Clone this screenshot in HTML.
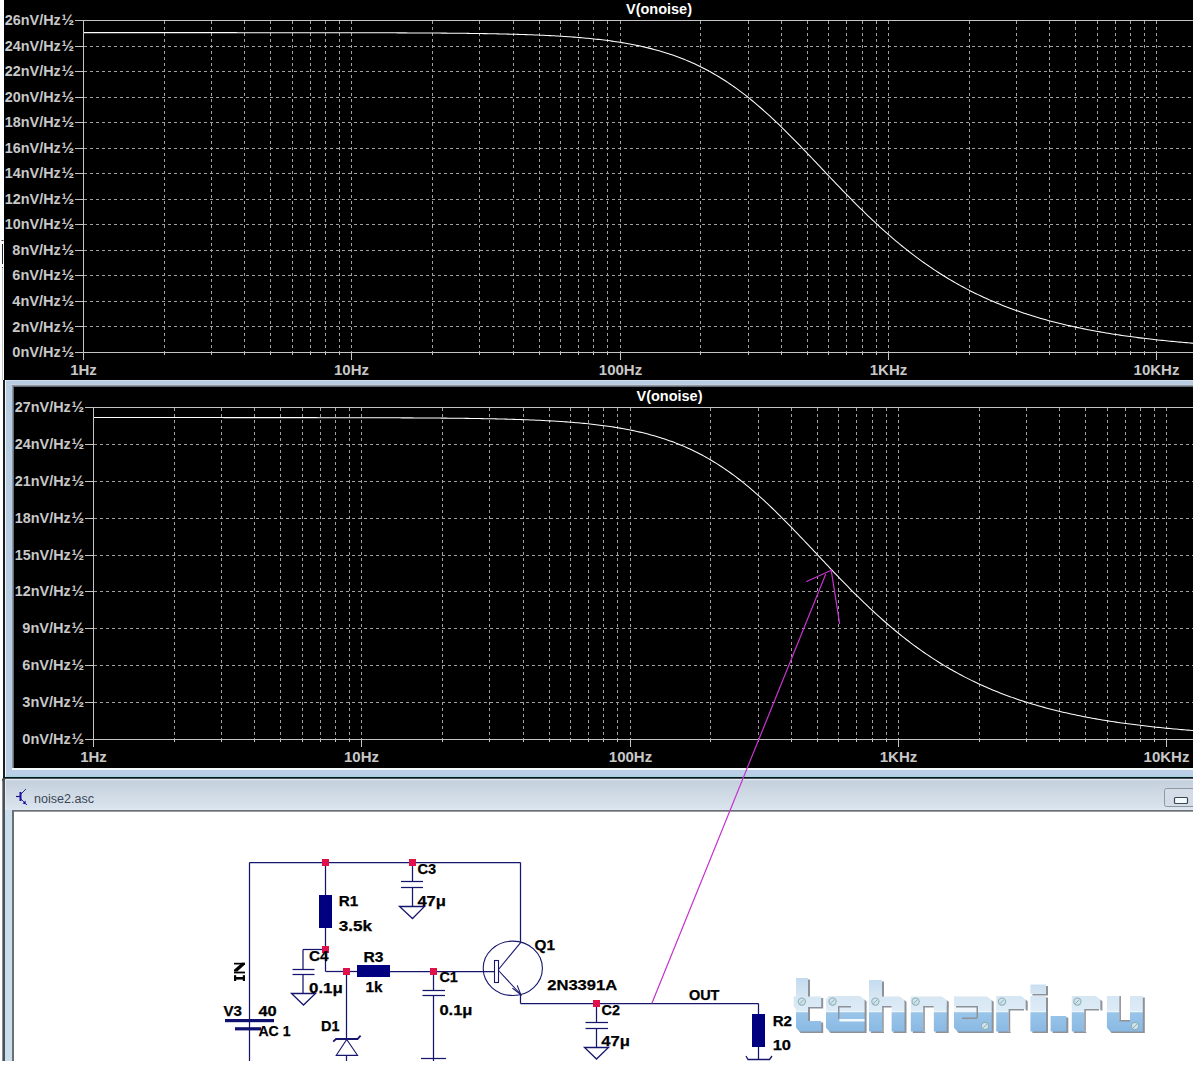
<!DOCTYPE html>
<html><head><meta charset="utf-8"><style>
html,body{margin:0;padding:0;background:#fff;}
body{width:1193px;height:1065px;overflow:hidden;position:relative;}
svg{position:absolute;left:0;top:0;display:block;}
text{font-family:"Liberation Sans", sans-serif;}
</style></head><body>
<svg width="1193" height="1065" viewBox="0 0 1193 1065" shape-rendering="auto">
<rect x="4" y="0" width="1189" height="380" fill="#000"/>
<rect x="2" y="268" width="1" height="112" fill="#c4c4c4"/>
<rect x="2" y="244" width="1" height="20" fill="#222"/>
<rect x="1.5" y="240" width="2" height="1" fill="#333"/>
<rect x="2" y="267" width="1" height="1" fill="#555"/>
<defs><linearGradient id="bb" x1="0" y1="0" x2="0" y2="1"><stop offset="0" stop-color="#bccde6"/><stop offset="0.6" stop-color="#bccfea"/><stop offset="1" stop-color="#a6d2dc"/></linearGradient></defs>
<rect x="3" y="380" width="1190" height="398.5" fill="#1c1c1c"/>
<rect x="5" y="380" width="1188" height="397" fill="#b9cde2"/>
<rect x="5" y="380" width="1188" height="1" fill="#d2deec"/>
<rect x="5" y="384" width="1188" height="1" fill="#c4d0e0"/>
<rect x="5" y="380" width="1" height="397" fill="#eef6ff"/>
<rect x="12" y="385" width="1181" height="384" fill="#8e96a2"/>
<rect x="13" y="386" width="1180" height="383" fill="#646c78"/>
<rect x="14" y="387" width="1179" height="381" fill="#000"/>
<rect x="12" y="768" width="1181" height="2" fill="#f4fbff"/>
<rect x="6" y="770" width="1187" height="7" fill="url(#bb)"/>
<rect x="3" y="777" width="1190" height="1.5" fill="#08181c"/>
<line x1="75" y1="20.5" x2="1193" y2="20.5" stroke="#c4c4c4" stroke-width="1"/>
<line x1="75" y1="46.5" x2="83" y2="46.5" stroke="#c4c4c4" stroke-width="1"/>
<line x1="84" y1="46.5" x2="1193" y2="46.5" stroke="#a0a0a0" stroke-width="1" stroke-dasharray="3 3"/>
<line x1="75" y1="71.5" x2="83" y2="71.5" stroke="#c4c4c4" stroke-width="1"/>
<line x1="84" y1="71.5" x2="1193" y2="71.5" stroke="#a0a0a0" stroke-width="1" stroke-dasharray="3 3"/>
<line x1="75" y1="97.5" x2="83" y2="97.5" stroke="#c4c4c4" stroke-width="1"/>
<line x1="84" y1="97.5" x2="1193" y2="97.5" stroke="#a0a0a0" stroke-width="1" stroke-dasharray="3 3"/>
<line x1="75" y1="122.5" x2="83" y2="122.5" stroke="#c4c4c4" stroke-width="1"/>
<line x1="84" y1="122.5" x2="1193" y2="122.5" stroke="#a0a0a0" stroke-width="1" stroke-dasharray="3 3"/>
<line x1="75" y1="148.5" x2="83" y2="148.5" stroke="#c4c4c4" stroke-width="1"/>
<line x1="84" y1="148.5" x2="1193" y2="148.5" stroke="#a0a0a0" stroke-width="1" stroke-dasharray="3 3"/>
<line x1="75" y1="173.5" x2="83" y2="173.5" stroke="#c4c4c4" stroke-width="1"/>
<line x1="84" y1="173.5" x2="1193" y2="173.5" stroke="#a0a0a0" stroke-width="1" stroke-dasharray="3 3"/>
<line x1="75" y1="199.5" x2="83" y2="199.5" stroke="#c4c4c4" stroke-width="1"/>
<line x1="84" y1="199.5" x2="1193" y2="199.5" stroke="#a0a0a0" stroke-width="1" stroke-dasharray="3 3"/>
<line x1="75" y1="224.5" x2="83" y2="224.5" stroke="#c4c4c4" stroke-width="1"/>
<line x1="84" y1="224.5" x2="1193" y2="224.5" stroke="#a0a0a0" stroke-width="1" stroke-dasharray="3 3"/>
<line x1="75" y1="250.5" x2="83" y2="250.5" stroke="#c4c4c4" stroke-width="1"/>
<line x1="84" y1="250.5" x2="1193" y2="250.5" stroke="#a0a0a0" stroke-width="1" stroke-dasharray="3 3"/>
<line x1="75" y1="275.5" x2="83" y2="275.5" stroke="#c4c4c4" stroke-width="1"/>
<line x1="84" y1="275.5" x2="1193" y2="275.5" stroke="#a0a0a0" stroke-width="1" stroke-dasharray="3 3"/>
<line x1="75" y1="301.5" x2="83" y2="301.5" stroke="#c4c4c4" stroke-width="1"/>
<line x1="84" y1="301.5" x2="1193" y2="301.5" stroke="#a0a0a0" stroke-width="1" stroke-dasharray="3 3"/>
<line x1="75" y1="326.5" x2="83" y2="326.5" stroke="#c4c4c4" stroke-width="1"/>
<line x1="84" y1="326.5" x2="1193" y2="326.5" stroke="#a0a0a0" stroke-width="1" stroke-dasharray="3 3"/>
<line x1="75" y1="352.5" x2="1193" y2="352.5" stroke="#c4c4c4" stroke-width="1"/>
<line x1="83.5" y1="20" x2="83.5" y2="360" stroke="#c4c4c4" stroke-width="1"/>
<line x1="164.5" y1="21" x2="164.5" y2="352" stroke="#a0a0a0" stroke-width="1" stroke-dasharray="3 3"/>
<line x1="164.5" y1="352" x2="164.5" y2="355" stroke="#c4c4c4" stroke-width="1"/>
<line x1="211.5" y1="21" x2="211.5" y2="352" stroke="#a0a0a0" stroke-width="1" stroke-dasharray="3 3"/>
<line x1="211.5" y1="352" x2="211.5" y2="355" stroke="#c4c4c4" stroke-width="1"/>
<line x1="244.5" y1="21" x2="244.5" y2="352" stroke="#a0a0a0" stroke-width="1" stroke-dasharray="3 3"/>
<line x1="244.5" y1="352" x2="244.5" y2="355" stroke="#c4c4c4" stroke-width="1"/>
<line x1="270.5" y1="21" x2="270.5" y2="352" stroke="#a0a0a0" stroke-width="1" stroke-dasharray="3 3"/>
<line x1="270.5" y1="352" x2="270.5" y2="355" stroke="#c4c4c4" stroke-width="1"/>
<line x1="292.5" y1="21" x2="292.5" y2="352" stroke="#a0a0a0" stroke-width="1" stroke-dasharray="3 3"/>
<line x1="292.5" y1="352" x2="292.5" y2="355" stroke="#c4c4c4" stroke-width="1"/>
<line x1="310.5" y1="21" x2="310.5" y2="352" stroke="#a0a0a0" stroke-width="1" stroke-dasharray="3 3"/>
<line x1="310.5" y1="352" x2="310.5" y2="355" stroke="#c4c4c4" stroke-width="1"/>
<line x1="325.5" y1="21" x2="325.5" y2="352" stroke="#a0a0a0" stroke-width="1" stroke-dasharray="3 3"/>
<line x1="325.5" y1="352" x2="325.5" y2="355" stroke="#c4c4c4" stroke-width="1"/>
<line x1="339.5" y1="21" x2="339.5" y2="352" stroke="#a0a0a0" stroke-width="1" stroke-dasharray="3 3"/>
<line x1="339.5" y1="352" x2="339.5" y2="355" stroke="#c4c4c4" stroke-width="1"/>
<line x1="351.5" y1="21" x2="351.5" y2="352" stroke="#a0a0a0" stroke-width="1" stroke-dasharray="3 3"/>
<line x1="351.5" y1="352" x2="351.5" y2="360" stroke="#c4c4c4" stroke-width="1"/>
<line x1="432.5" y1="21" x2="432.5" y2="352" stroke="#a0a0a0" stroke-width="1" stroke-dasharray="3 3"/>
<line x1="432.5" y1="352" x2="432.5" y2="355" stroke="#c4c4c4" stroke-width="1"/>
<line x1="479.5" y1="21" x2="479.5" y2="352" stroke="#a0a0a0" stroke-width="1" stroke-dasharray="3 3"/>
<line x1="479.5" y1="352" x2="479.5" y2="355" stroke="#c4c4c4" stroke-width="1"/>
<line x1="513.5" y1="21" x2="513.5" y2="352" stroke="#a0a0a0" stroke-width="1" stroke-dasharray="3 3"/>
<line x1="513.5" y1="352" x2="513.5" y2="355" stroke="#c4c4c4" stroke-width="1"/>
<line x1="539.5" y1="21" x2="539.5" y2="352" stroke="#a0a0a0" stroke-width="1" stroke-dasharray="3 3"/>
<line x1="539.5" y1="352" x2="539.5" y2="355" stroke="#c4c4c4" stroke-width="1"/>
<line x1="560.5" y1="21" x2="560.5" y2="352" stroke="#a0a0a0" stroke-width="1" stroke-dasharray="3 3"/>
<line x1="560.5" y1="352" x2="560.5" y2="355" stroke="#c4c4c4" stroke-width="1"/>
<line x1="578.5" y1="21" x2="578.5" y2="352" stroke="#a0a0a0" stroke-width="1" stroke-dasharray="3 3"/>
<line x1="578.5" y1="352" x2="578.5" y2="355" stroke="#c4c4c4" stroke-width="1"/>
<line x1="593.5" y1="21" x2="593.5" y2="352" stroke="#a0a0a0" stroke-width="1" stroke-dasharray="3 3"/>
<line x1="593.5" y1="352" x2="593.5" y2="355" stroke="#c4c4c4" stroke-width="1"/>
<line x1="607.5" y1="21" x2="607.5" y2="352" stroke="#a0a0a0" stroke-width="1" stroke-dasharray="3 3"/>
<line x1="607.5" y1="352" x2="607.5" y2="355" stroke="#c4c4c4" stroke-width="1"/>
<line x1="620.5" y1="21" x2="620.5" y2="352" stroke="#a0a0a0" stroke-width="1" stroke-dasharray="3 3"/>
<line x1="620.5" y1="352" x2="620.5" y2="360" stroke="#c4c4c4" stroke-width="1"/>
<line x1="700.5" y1="21" x2="700.5" y2="352" stroke="#a0a0a0" stroke-width="1" stroke-dasharray="3 3"/>
<line x1="700.5" y1="352" x2="700.5" y2="355" stroke="#c4c4c4" stroke-width="1"/>
<line x1="748.5" y1="21" x2="748.5" y2="352" stroke="#a0a0a0" stroke-width="1" stroke-dasharray="3 3"/>
<line x1="748.5" y1="352" x2="748.5" y2="355" stroke="#c4c4c4" stroke-width="1"/>
<line x1="781.5" y1="21" x2="781.5" y2="352" stroke="#a0a0a0" stroke-width="1" stroke-dasharray="3 3"/>
<line x1="781.5" y1="352" x2="781.5" y2="355" stroke="#c4c4c4" stroke-width="1"/>
<line x1="807.5" y1="21" x2="807.5" y2="352" stroke="#a0a0a0" stroke-width="1" stroke-dasharray="3 3"/>
<line x1="807.5" y1="352" x2="807.5" y2="355" stroke="#c4c4c4" stroke-width="1"/>
<line x1="828.5" y1="21" x2="828.5" y2="352" stroke="#a0a0a0" stroke-width="1" stroke-dasharray="3 3"/>
<line x1="828.5" y1="352" x2="828.5" y2="355" stroke="#c4c4c4" stroke-width="1"/>
<line x1="846.5" y1="21" x2="846.5" y2="352" stroke="#a0a0a0" stroke-width="1" stroke-dasharray="3 3"/>
<line x1="846.5" y1="352" x2="846.5" y2="355" stroke="#c4c4c4" stroke-width="1"/>
<line x1="862.5" y1="21" x2="862.5" y2="352" stroke="#a0a0a0" stroke-width="1" stroke-dasharray="3 3"/>
<line x1="862.5" y1="352" x2="862.5" y2="355" stroke="#c4c4c4" stroke-width="1"/>
<line x1="876.5" y1="21" x2="876.5" y2="352" stroke="#a0a0a0" stroke-width="1" stroke-dasharray="3 3"/>
<line x1="876.5" y1="352" x2="876.5" y2="355" stroke="#c4c4c4" stroke-width="1"/>
<line x1="888.5" y1="21" x2="888.5" y2="352" stroke="#a0a0a0" stroke-width="1" stroke-dasharray="3 3"/>
<line x1="888.5" y1="352" x2="888.5" y2="360" stroke="#c4c4c4" stroke-width="1"/>
<line x1="969.5" y1="21" x2="969.5" y2="352" stroke="#a0a0a0" stroke-width="1" stroke-dasharray="3 3"/>
<line x1="969.5" y1="352" x2="969.5" y2="355" stroke="#c4c4c4" stroke-width="1"/>
<line x1="1016.5" y1="21" x2="1016.5" y2="352" stroke="#a0a0a0" stroke-width="1" stroke-dasharray="3 3"/>
<line x1="1016.5" y1="352" x2="1016.5" y2="355" stroke="#c4c4c4" stroke-width="1"/>
<line x1="1049.5" y1="21" x2="1049.5" y2="352" stroke="#a0a0a0" stroke-width="1" stroke-dasharray="3 3"/>
<line x1="1049.5" y1="352" x2="1049.5" y2="355" stroke="#c4c4c4" stroke-width="1"/>
<line x1="1075.5" y1="21" x2="1075.5" y2="352" stroke="#a0a0a0" stroke-width="1" stroke-dasharray="3 3"/>
<line x1="1075.5" y1="352" x2="1075.5" y2="355" stroke="#c4c4c4" stroke-width="1"/>
<line x1="1097.5" y1="21" x2="1097.5" y2="352" stroke="#a0a0a0" stroke-width="1" stroke-dasharray="3 3"/>
<line x1="1097.5" y1="352" x2="1097.5" y2="355" stroke="#c4c4c4" stroke-width="1"/>
<line x1="1115.5" y1="21" x2="1115.5" y2="352" stroke="#a0a0a0" stroke-width="1" stroke-dasharray="3 3"/>
<line x1="1115.5" y1="352" x2="1115.5" y2="355" stroke="#c4c4c4" stroke-width="1"/>
<line x1="1130.5" y1="21" x2="1130.5" y2="352" stroke="#a0a0a0" stroke-width="1" stroke-dasharray="3 3"/>
<line x1="1130.5" y1="352" x2="1130.5" y2="355" stroke="#c4c4c4" stroke-width="1"/>
<line x1="1144.5" y1="21" x2="1144.5" y2="352" stroke="#a0a0a0" stroke-width="1" stroke-dasharray="3 3"/>
<line x1="1144.5" y1="352" x2="1144.5" y2="355" stroke="#c4c4c4" stroke-width="1"/>
<line x1="1156.5" y1="21" x2="1156.5" y2="352" stroke="#a0a0a0" stroke-width="1" stroke-dasharray="3 3"/>
<line x1="1156.5" y1="352" x2="1156.5" y2="360" stroke="#c4c4c4" stroke-width="1"/>
<line x1="85" y1="407.5" x2="1193" y2="407.5" stroke="#c4c4c4" stroke-width="1"/>
<line x1="85" y1="444.5" x2="93" y2="444.5" stroke="#c4c4c4" stroke-width="1"/>
<line x1="94" y1="444.5" x2="1193" y2="444.5" stroke="#a0a0a0" stroke-width="1" stroke-dasharray="3 3"/>
<line x1="85" y1="481.5" x2="93" y2="481.5" stroke="#c4c4c4" stroke-width="1"/>
<line x1="94" y1="481.5" x2="1193" y2="481.5" stroke="#a0a0a0" stroke-width="1" stroke-dasharray="3 3"/>
<line x1="85" y1="518.5" x2="93" y2="518.5" stroke="#c4c4c4" stroke-width="1"/>
<line x1="94" y1="518.5" x2="1193" y2="518.5" stroke="#a0a0a0" stroke-width="1" stroke-dasharray="3 3"/>
<line x1="85" y1="555.5" x2="93" y2="555.5" stroke="#c4c4c4" stroke-width="1"/>
<line x1="94" y1="555.5" x2="1193" y2="555.5" stroke="#a0a0a0" stroke-width="1" stroke-dasharray="3 3"/>
<line x1="85" y1="591.5" x2="93" y2="591.5" stroke="#c4c4c4" stroke-width="1"/>
<line x1="94" y1="591.5" x2="1193" y2="591.5" stroke="#a0a0a0" stroke-width="1" stroke-dasharray="3 3"/>
<line x1="85" y1="628.5" x2="93" y2="628.5" stroke="#c4c4c4" stroke-width="1"/>
<line x1="94" y1="628.5" x2="1193" y2="628.5" stroke="#a0a0a0" stroke-width="1" stroke-dasharray="3 3"/>
<line x1="85" y1="665.5" x2="93" y2="665.5" stroke="#c4c4c4" stroke-width="1"/>
<line x1="94" y1="665.5" x2="1193" y2="665.5" stroke="#a0a0a0" stroke-width="1" stroke-dasharray="3 3"/>
<line x1="85" y1="702.5" x2="93" y2="702.5" stroke="#c4c4c4" stroke-width="1"/>
<line x1="94" y1="702.5" x2="1193" y2="702.5" stroke="#a0a0a0" stroke-width="1" stroke-dasharray="3 3"/>
<line x1="85" y1="739.5" x2="1193" y2="739.5" stroke="#c4c4c4" stroke-width="1"/>
<line x1="93.5" y1="407" x2="93.5" y2="747" stroke="#c4c4c4" stroke-width="1"/>
<line x1="174.5" y1="408" x2="174.5" y2="739" stroke="#a0a0a0" stroke-width="1" stroke-dasharray="3 3"/>
<line x1="174.5" y1="739" x2="174.5" y2="742" stroke="#c4c4c4" stroke-width="1"/>
<line x1="221.5" y1="408" x2="221.5" y2="739" stroke="#a0a0a0" stroke-width="1" stroke-dasharray="3 3"/>
<line x1="221.5" y1="739" x2="221.5" y2="742" stroke="#c4c4c4" stroke-width="1"/>
<line x1="254.5" y1="408" x2="254.5" y2="739" stroke="#a0a0a0" stroke-width="1" stroke-dasharray="3 3"/>
<line x1="254.5" y1="739" x2="254.5" y2="742" stroke="#c4c4c4" stroke-width="1"/>
<line x1="280.5" y1="408" x2="280.5" y2="739" stroke="#a0a0a0" stroke-width="1" stroke-dasharray="3 3"/>
<line x1="280.5" y1="739" x2="280.5" y2="742" stroke="#c4c4c4" stroke-width="1"/>
<line x1="302.5" y1="408" x2="302.5" y2="739" stroke="#a0a0a0" stroke-width="1" stroke-dasharray="3 3"/>
<line x1="302.5" y1="739" x2="302.5" y2="742" stroke="#c4c4c4" stroke-width="1"/>
<line x1="320.5" y1="408" x2="320.5" y2="739" stroke="#a0a0a0" stroke-width="1" stroke-dasharray="3 3"/>
<line x1="320.5" y1="739" x2="320.5" y2="742" stroke="#c4c4c4" stroke-width="1"/>
<line x1="335.5" y1="408" x2="335.5" y2="739" stroke="#a0a0a0" stroke-width="1" stroke-dasharray="3 3"/>
<line x1="335.5" y1="739" x2="335.5" y2="742" stroke="#c4c4c4" stroke-width="1"/>
<line x1="349.5" y1="408" x2="349.5" y2="739" stroke="#a0a0a0" stroke-width="1" stroke-dasharray="3 3"/>
<line x1="349.5" y1="739" x2="349.5" y2="742" stroke="#c4c4c4" stroke-width="1"/>
<line x1="361.5" y1="408" x2="361.5" y2="739" stroke="#a0a0a0" stroke-width="1" stroke-dasharray="3 3"/>
<line x1="361.5" y1="739" x2="361.5" y2="747" stroke="#c4c4c4" stroke-width="1"/>
<line x1="442.5" y1="408" x2="442.5" y2="739" stroke="#a0a0a0" stroke-width="1" stroke-dasharray="3 3"/>
<line x1="442.5" y1="739" x2="442.5" y2="742" stroke="#c4c4c4" stroke-width="1"/>
<line x1="489.5" y1="408" x2="489.5" y2="739" stroke="#a0a0a0" stroke-width="1" stroke-dasharray="3 3"/>
<line x1="489.5" y1="739" x2="489.5" y2="742" stroke="#c4c4c4" stroke-width="1"/>
<line x1="523.5" y1="408" x2="523.5" y2="739" stroke="#a0a0a0" stroke-width="1" stroke-dasharray="3 3"/>
<line x1="523.5" y1="739" x2="523.5" y2="742" stroke="#c4c4c4" stroke-width="1"/>
<line x1="549.5" y1="408" x2="549.5" y2="739" stroke="#a0a0a0" stroke-width="1" stroke-dasharray="3 3"/>
<line x1="549.5" y1="739" x2="549.5" y2="742" stroke="#c4c4c4" stroke-width="1"/>
<line x1="570.5" y1="408" x2="570.5" y2="739" stroke="#a0a0a0" stroke-width="1" stroke-dasharray="3 3"/>
<line x1="570.5" y1="739" x2="570.5" y2="742" stroke="#c4c4c4" stroke-width="1"/>
<line x1="588.5" y1="408" x2="588.5" y2="739" stroke="#a0a0a0" stroke-width="1" stroke-dasharray="3 3"/>
<line x1="588.5" y1="739" x2="588.5" y2="742" stroke="#c4c4c4" stroke-width="1"/>
<line x1="603.5" y1="408" x2="603.5" y2="739" stroke="#a0a0a0" stroke-width="1" stroke-dasharray="3 3"/>
<line x1="603.5" y1="739" x2="603.5" y2="742" stroke="#c4c4c4" stroke-width="1"/>
<line x1="617.5" y1="408" x2="617.5" y2="739" stroke="#a0a0a0" stroke-width="1" stroke-dasharray="3 3"/>
<line x1="617.5" y1="739" x2="617.5" y2="742" stroke="#c4c4c4" stroke-width="1"/>
<line x1="630.5" y1="408" x2="630.5" y2="739" stroke="#a0a0a0" stroke-width="1" stroke-dasharray="3 3"/>
<line x1="630.5" y1="739" x2="630.5" y2="747" stroke="#c4c4c4" stroke-width="1"/>
<line x1="710.5" y1="408" x2="710.5" y2="739" stroke="#a0a0a0" stroke-width="1" stroke-dasharray="3 3"/>
<line x1="710.5" y1="739" x2="710.5" y2="742" stroke="#c4c4c4" stroke-width="1"/>
<line x1="758.5" y1="408" x2="758.5" y2="739" stroke="#a0a0a0" stroke-width="1" stroke-dasharray="3 3"/>
<line x1="758.5" y1="739" x2="758.5" y2="742" stroke="#c4c4c4" stroke-width="1"/>
<line x1="791.5" y1="408" x2="791.5" y2="739" stroke="#a0a0a0" stroke-width="1" stroke-dasharray="3 3"/>
<line x1="791.5" y1="739" x2="791.5" y2="742" stroke="#c4c4c4" stroke-width="1"/>
<line x1="817.5" y1="408" x2="817.5" y2="739" stroke="#a0a0a0" stroke-width="1" stroke-dasharray="3 3"/>
<line x1="817.5" y1="739" x2="817.5" y2="742" stroke="#c4c4c4" stroke-width="1"/>
<line x1="838.5" y1="408" x2="838.5" y2="739" stroke="#a0a0a0" stroke-width="1" stroke-dasharray="3 3"/>
<line x1="838.5" y1="739" x2="838.5" y2="742" stroke="#c4c4c4" stroke-width="1"/>
<line x1="856.5" y1="408" x2="856.5" y2="739" stroke="#a0a0a0" stroke-width="1" stroke-dasharray="3 3"/>
<line x1="856.5" y1="739" x2="856.5" y2="742" stroke="#c4c4c4" stroke-width="1"/>
<line x1="872.5" y1="408" x2="872.5" y2="739" stroke="#a0a0a0" stroke-width="1" stroke-dasharray="3 3"/>
<line x1="872.5" y1="739" x2="872.5" y2="742" stroke="#c4c4c4" stroke-width="1"/>
<line x1="886.5" y1="408" x2="886.5" y2="739" stroke="#a0a0a0" stroke-width="1" stroke-dasharray="3 3"/>
<line x1="886.5" y1="739" x2="886.5" y2="742" stroke="#c4c4c4" stroke-width="1"/>
<line x1="898.5" y1="408" x2="898.5" y2="739" stroke="#a0a0a0" stroke-width="1" stroke-dasharray="3 3"/>
<line x1="898.5" y1="739" x2="898.5" y2="747" stroke="#c4c4c4" stroke-width="1"/>
<line x1="979.5" y1="408" x2="979.5" y2="739" stroke="#a0a0a0" stroke-width="1" stroke-dasharray="3 3"/>
<line x1="979.5" y1="739" x2="979.5" y2="742" stroke="#c4c4c4" stroke-width="1"/>
<line x1="1026.5" y1="408" x2="1026.5" y2="739" stroke="#a0a0a0" stroke-width="1" stroke-dasharray="3 3"/>
<line x1="1026.5" y1="739" x2="1026.5" y2="742" stroke="#c4c4c4" stroke-width="1"/>
<line x1="1059.5" y1="408" x2="1059.5" y2="739" stroke="#a0a0a0" stroke-width="1" stroke-dasharray="3 3"/>
<line x1="1059.5" y1="739" x2="1059.5" y2="742" stroke="#c4c4c4" stroke-width="1"/>
<line x1="1085.5" y1="408" x2="1085.5" y2="739" stroke="#a0a0a0" stroke-width="1" stroke-dasharray="3 3"/>
<line x1="1085.5" y1="739" x2="1085.5" y2="742" stroke="#c4c4c4" stroke-width="1"/>
<line x1="1107.5" y1="408" x2="1107.5" y2="739" stroke="#a0a0a0" stroke-width="1" stroke-dasharray="3 3"/>
<line x1="1107.5" y1="739" x2="1107.5" y2="742" stroke="#c4c4c4" stroke-width="1"/>
<line x1="1125.5" y1="408" x2="1125.5" y2="739" stroke="#a0a0a0" stroke-width="1" stroke-dasharray="3 3"/>
<line x1="1125.5" y1="739" x2="1125.5" y2="742" stroke="#c4c4c4" stroke-width="1"/>
<line x1="1140.5" y1="408" x2="1140.5" y2="739" stroke="#a0a0a0" stroke-width="1" stroke-dasharray="3 3"/>
<line x1="1140.5" y1="739" x2="1140.5" y2="742" stroke="#c4c4c4" stroke-width="1"/>
<line x1="1154.5" y1="408" x2="1154.5" y2="739" stroke="#a0a0a0" stroke-width="1" stroke-dasharray="3 3"/>
<line x1="1154.5" y1="739" x2="1154.5" y2="742" stroke="#c4c4c4" stroke-width="1"/>
<line x1="1166.5" y1="408" x2="1166.5" y2="739" stroke="#a0a0a0" stroke-width="1" stroke-dasharray="3 3"/>
<line x1="1166.5" y1="739" x2="1166.5" y2="747" stroke="#c4c4c4" stroke-width="1"/>
<text x="4.8" y="25.0" font-size="15" font-weight="bold" fill="#c8c8c8" text-anchor="start" textLength="56.0" lengthAdjust="spacingAndGlyphs" >26nV/Hz</text>
<text x="61.4" y="25.0" font-size="15" font-weight="bold" fill="#c8c8c8" text-anchor="start" textLength="12.6" lengthAdjust="spacingAndGlyphs" >&#189;</text>
<text x="4.8" y="50.5" font-size="15" font-weight="bold" fill="#c8c8c8" text-anchor="start" textLength="56.0" lengthAdjust="spacingAndGlyphs" >24nV/Hz</text>
<text x="61.4" y="50.5" font-size="15" font-weight="bold" fill="#c8c8c8" text-anchor="start" textLength="12.6" lengthAdjust="spacingAndGlyphs" >&#189;</text>
<text x="4.8" y="76.1" font-size="15" font-weight="bold" fill="#c8c8c8" text-anchor="start" textLength="56.0" lengthAdjust="spacingAndGlyphs" >22nV/Hz</text>
<text x="61.4" y="76.1" font-size="15" font-weight="bold" fill="#c8c8c8" text-anchor="start" textLength="12.6" lengthAdjust="spacingAndGlyphs" >&#189;</text>
<text x="4.8" y="101.6" font-size="15" font-weight="bold" fill="#c8c8c8" text-anchor="start" textLength="56.0" lengthAdjust="spacingAndGlyphs" >20nV/Hz</text>
<text x="61.4" y="101.6" font-size="15" font-weight="bold" fill="#c8c8c8" text-anchor="start" textLength="12.6" lengthAdjust="spacingAndGlyphs" >&#189;</text>
<text x="4.8" y="127.2" font-size="15" font-weight="bold" fill="#c8c8c8" text-anchor="start" textLength="56.0" lengthAdjust="spacingAndGlyphs" >18nV/Hz</text>
<text x="61.4" y="127.2" font-size="15" font-weight="bold" fill="#c8c8c8" text-anchor="start" textLength="12.6" lengthAdjust="spacingAndGlyphs" >&#189;</text>
<text x="4.8" y="152.7" font-size="15" font-weight="bold" fill="#c8c8c8" text-anchor="start" textLength="56.0" lengthAdjust="spacingAndGlyphs" >16nV/Hz</text>
<text x="61.4" y="152.7" font-size="15" font-weight="bold" fill="#c8c8c8" text-anchor="start" textLength="12.6" lengthAdjust="spacingAndGlyphs" >&#189;</text>
<text x="4.8" y="178.2" font-size="15" font-weight="bold" fill="#c8c8c8" text-anchor="start" textLength="56.0" lengthAdjust="spacingAndGlyphs" >14nV/Hz</text>
<text x="61.4" y="178.2" font-size="15" font-weight="bold" fill="#c8c8c8" text-anchor="start" textLength="12.6" lengthAdjust="spacingAndGlyphs" >&#189;</text>
<text x="4.8" y="203.8" font-size="15" font-weight="bold" fill="#c8c8c8" text-anchor="start" textLength="56.0" lengthAdjust="spacingAndGlyphs" >12nV/Hz</text>
<text x="61.4" y="203.8" font-size="15" font-weight="bold" fill="#c8c8c8" text-anchor="start" textLength="12.6" lengthAdjust="spacingAndGlyphs" >&#189;</text>
<text x="4.8" y="229.3" font-size="15" font-weight="bold" fill="#c8c8c8" text-anchor="start" textLength="56.0" lengthAdjust="spacingAndGlyphs" >10nV/Hz</text>
<text x="61.4" y="229.3" font-size="15" font-weight="bold" fill="#c8c8c8" text-anchor="start" textLength="12.6" lengthAdjust="spacingAndGlyphs" >&#189;</text>
<text x="12.3" y="254.8" font-size="15" font-weight="bold" fill="#c8c8c8" text-anchor="start" textLength="48.5" lengthAdjust="spacingAndGlyphs" >8nV/Hz</text>
<text x="61.4" y="254.8" font-size="15" font-weight="bold" fill="#c8c8c8" text-anchor="start" textLength="12.6" lengthAdjust="spacingAndGlyphs" >&#189;</text>
<text x="12.3" y="280.4" font-size="15" font-weight="bold" fill="#c8c8c8" text-anchor="start" textLength="48.5" lengthAdjust="spacingAndGlyphs" >6nV/Hz</text>
<text x="61.4" y="280.4" font-size="15" font-weight="bold" fill="#c8c8c8" text-anchor="start" textLength="12.6" lengthAdjust="spacingAndGlyphs" >&#189;</text>
<text x="12.3" y="305.9" font-size="15" font-weight="bold" fill="#c8c8c8" text-anchor="start" textLength="48.5" lengthAdjust="spacingAndGlyphs" >4nV/Hz</text>
<text x="61.4" y="305.9" font-size="15" font-weight="bold" fill="#c8c8c8" text-anchor="start" textLength="12.6" lengthAdjust="spacingAndGlyphs" >&#189;</text>
<text x="12.3" y="331.5" font-size="15" font-weight="bold" fill="#c8c8c8" text-anchor="start" textLength="48.5" lengthAdjust="spacingAndGlyphs" >2nV/Hz</text>
<text x="61.4" y="331.5" font-size="15" font-weight="bold" fill="#c8c8c8" text-anchor="start" textLength="12.6" lengthAdjust="spacingAndGlyphs" >&#189;</text>
<text x="12.3" y="357.0" font-size="15" font-weight="bold" fill="#c8c8c8" text-anchor="start" textLength="48.5" lengthAdjust="spacingAndGlyphs" >0nV/Hz</text>
<text x="61.4" y="357.0" font-size="15" font-weight="bold" fill="#c8c8c8" text-anchor="start" textLength="12.6" lengthAdjust="spacingAndGlyphs" >&#189;</text>
<text x="83.5" y="375.0" font-size="15" font-weight="bold" fill="#c8c8c8" text-anchor="middle" >1Hz</text>
<text x="351.5" y="375.0" font-size="15" font-weight="bold" fill="#c8c8c8" text-anchor="middle" >10Hz</text>
<text x="620.5" y="375.0" font-size="15" font-weight="bold" fill="#c8c8c8" text-anchor="middle" >100Hz</text>
<text x="888.5" y="375.0" font-size="15" font-weight="bold" fill="#c8c8c8" text-anchor="middle" >1KHz</text>
<text x="1156.5" y="375.0" font-size="15" font-weight="bold" fill="#c8c8c8" text-anchor="middle" >10KHz</text>
<text x="626.0" y="14.0" font-size="15" font-weight="bold" fill="#ffffff" text-anchor="start" textLength="66.0" lengthAdjust="spacingAndGlyphs" >V(onoise)</text>
<text x="14.8" y="412.0" font-size="15" font-weight="bold" fill="#c8c8c8" text-anchor="start" textLength="56.0" lengthAdjust="spacingAndGlyphs" >27nV/Hz</text>
<text x="71.4" y="412.0" font-size="15" font-weight="bold" fill="#c8c8c8" text-anchor="start" textLength="12.6" lengthAdjust="spacingAndGlyphs" >&#189;</text>
<text x="14.8" y="448.9" font-size="15" font-weight="bold" fill="#c8c8c8" text-anchor="start" textLength="56.0" lengthAdjust="spacingAndGlyphs" >24nV/Hz</text>
<text x="71.4" y="448.9" font-size="15" font-weight="bold" fill="#c8c8c8" text-anchor="start" textLength="12.6" lengthAdjust="spacingAndGlyphs" >&#189;</text>
<text x="14.8" y="485.8" font-size="15" font-weight="bold" fill="#c8c8c8" text-anchor="start" textLength="56.0" lengthAdjust="spacingAndGlyphs" >21nV/Hz</text>
<text x="71.4" y="485.8" font-size="15" font-weight="bold" fill="#c8c8c8" text-anchor="start" textLength="12.6" lengthAdjust="spacingAndGlyphs" >&#189;</text>
<text x="14.8" y="522.7" font-size="15" font-weight="bold" fill="#c8c8c8" text-anchor="start" textLength="56.0" lengthAdjust="spacingAndGlyphs" >18nV/Hz</text>
<text x="71.4" y="522.7" font-size="15" font-weight="bold" fill="#c8c8c8" text-anchor="start" textLength="12.6" lengthAdjust="spacingAndGlyphs" >&#189;</text>
<text x="14.8" y="559.6" font-size="15" font-weight="bold" fill="#c8c8c8" text-anchor="start" textLength="56.0" lengthAdjust="spacingAndGlyphs" >15nV/Hz</text>
<text x="71.4" y="559.6" font-size="15" font-weight="bold" fill="#c8c8c8" text-anchor="start" textLength="12.6" lengthAdjust="spacingAndGlyphs" >&#189;</text>
<text x="14.8" y="596.4" font-size="15" font-weight="bold" fill="#c8c8c8" text-anchor="start" textLength="56.0" lengthAdjust="spacingAndGlyphs" >12nV/Hz</text>
<text x="71.4" y="596.4" font-size="15" font-weight="bold" fill="#c8c8c8" text-anchor="start" textLength="12.6" lengthAdjust="spacingAndGlyphs" >&#189;</text>
<text x="22.3" y="633.3" font-size="15" font-weight="bold" fill="#c8c8c8" text-anchor="start" textLength="48.5" lengthAdjust="spacingAndGlyphs" >9nV/Hz</text>
<text x="71.4" y="633.3" font-size="15" font-weight="bold" fill="#c8c8c8" text-anchor="start" textLength="12.6" lengthAdjust="spacingAndGlyphs" >&#189;</text>
<text x="22.3" y="670.2" font-size="15" font-weight="bold" fill="#c8c8c8" text-anchor="start" textLength="48.5" lengthAdjust="spacingAndGlyphs" >6nV/Hz</text>
<text x="71.4" y="670.2" font-size="15" font-weight="bold" fill="#c8c8c8" text-anchor="start" textLength="12.6" lengthAdjust="spacingAndGlyphs" >&#189;</text>
<text x="22.3" y="707.1" font-size="15" font-weight="bold" fill="#c8c8c8" text-anchor="start" textLength="48.5" lengthAdjust="spacingAndGlyphs" >3nV/Hz</text>
<text x="71.4" y="707.1" font-size="15" font-weight="bold" fill="#c8c8c8" text-anchor="start" textLength="12.6" lengthAdjust="spacingAndGlyphs" >&#189;</text>
<text x="22.3" y="744.0" font-size="15" font-weight="bold" fill="#c8c8c8" text-anchor="start" textLength="48.5" lengthAdjust="spacingAndGlyphs" >0nV/Hz</text>
<text x="71.4" y="744.0" font-size="15" font-weight="bold" fill="#c8c8c8" text-anchor="start" textLength="12.6" lengthAdjust="spacingAndGlyphs" >&#189;</text>
<text x="93.5" y="762.0" font-size="15" font-weight="bold" fill="#c8c8c8" text-anchor="middle" >1Hz</text>
<text x="361.5" y="762.0" font-size="15" font-weight="bold" fill="#c8c8c8" text-anchor="middle" >10Hz</text>
<text x="630.5" y="762.0" font-size="15" font-weight="bold" fill="#c8c8c8" text-anchor="middle" >100Hz</text>
<text x="898.5" y="762.0" font-size="15" font-weight="bold" fill="#c8c8c8" text-anchor="middle" >1KHz</text>
<text x="1166.5" y="762.0" font-size="15" font-weight="bold" fill="#c8c8c8" text-anchor="middle" >10KHz</text>
<text x="636.5" y="401.0" font-size="15" font-weight="bold" fill="#ffffff" text-anchor="start" textLength="66.0" lengthAdjust="spacingAndGlyphs" >V(onoise)</text>
<polyline points="84.0,32.63 86.0,32.63 88.0,32.63 90.0,32.63 92.0,32.63 94.0,32.63 96.0,32.63 98.0,32.63 100.0,32.63 102.0,32.63 104.0,32.63 106.0,32.63 108.0,32.63 110.0,32.63 112.0,32.63 114.0,32.63 116.0,32.63 118.0,32.63 120.0,32.63 122.0,32.63 124.0,32.63 126.0,32.63 128.0,32.63 130.0,32.63 132.0,32.63 134.0,32.63 136.0,32.63 138.0,32.63 140.0,32.63 142.0,32.63 144.0,32.63 146.0,32.63 148.0,32.63 150.0,32.63 152.0,32.63 154.0,32.63 156.0,32.63 158.0,32.63 160.0,32.63 162.0,32.63 164.0,32.63 166.0,32.63 168.0,32.64 170.0,32.64 172.0,32.64 174.0,32.64 176.0,32.64 178.0,32.64 180.0,32.64 182.0,32.64 184.0,32.64 186.0,32.64 188.0,32.64 190.0,32.64 192.0,32.64 194.0,32.64 196.0,32.64 198.0,32.64 200.0,32.64 202.0,32.64 204.0,32.64 206.0,32.64 208.0,32.64 210.0,32.64 212.0,32.64 214.0,32.64 216.0,32.64 218.0,32.64 220.0,32.64 222.0,32.64 224.0,32.64 226.0,32.64 228.0,32.64 230.0,32.64 232.0,32.64 234.0,32.64 236.0,32.64 238.0,32.65 240.0,32.65 242.0,32.65 244.0,32.65 246.0,32.65 248.0,32.65 250.0,32.65 252.0,32.65 254.0,32.65 256.0,32.65 258.0,32.65 260.0,32.65 262.0,32.65 264.0,32.65 266.0,32.65 268.0,32.65 270.0,32.66 272.0,32.66 274.0,32.66 276.0,32.66 278.0,32.66 280.0,32.66 282.0,32.66 284.0,32.66 286.0,32.66 288.0,32.66 290.0,32.67 292.0,32.67 294.0,32.67 296.0,32.67 298.0,32.67 300.0,32.67 302.0,32.67 304.0,32.68 306.0,32.68 308.0,32.68 310.0,32.68 312.0,32.68 314.0,32.68 316.0,32.69 318.0,32.69 320.0,32.69 322.0,32.69 324.0,32.69 326.0,32.70 328.0,32.70 330.0,32.70 332.0,32.70 334.0,32.71 336.0,32.71 338.0,32.71 340.0,32.71 342.0,32.72 344.0,32.72 346.0,32.72 348.0,32.73 350.0,32.73 352.0,32.73 354.0,32.74 356.0,32.74 358.0,32.74 360.0,32.75 362.0,32.75 364.0,32.76 366.0,32.76 368.0,32.77 370.0,32.77 372.0,32.77 374.0,32.78 376.0,32.78 378.0,32.79 380.0,32.80 382.0,32.80 384.0,32.81 386.0,32.81 388.0,32.82 390.0,32.83 392.0,32.83 394.0,32.84 396.0,32.85 398.0,32.86 400.0,32.86 402.0,32.87 404.0,32.88 406.0,32.89 408.0,32.90 410.0,32.91 412.0,32.92 414.0,32.93 416.0,32.94 418.0,32.95 420.0,32.96 422.0,32.97 424.0,32.98 426.0,32.99 428.0,33.01 430.0,33.02 432.0,33.03 434.0,33.05 436.0,33.06 438.0,33.08 440.0,33.09 442.0,33.11 444.0,33.12 446.0,33.14 448.0,33.16 450.0,33.18 452.0,33.20 454.0,33.22 456.0,33.24 458.0,33.26 460.0,33.28 462.0,33.30 464.0,33.33 466.0,33.35 468.0,33.38 470.0,33.40 472.0,33.43 474.0,33.46 476.0,33.48 478.0,33.51 480.0,33.55 482.0,33.58 484.0,33.61 486.0,33.64 488.0,33.68 490.0,33.72 492.0,33.75 494.0,33.79 496.0,33.83 498.0,33.87 500.0,33.92 502.0,33.96 504.0,34.01 506.0,34.06 508.0,34.11 510.0,34.16 512.0,34.21 514.0,34.26 516.0,34.32 518.0,34.38 520.0,34.44 522.0,34.50 524.0,34.57 526.0,34.63 528.0,34.70 530.0,34.77 532.0,34.85 534.0,34.93 536.0,35.00 538.0,35.09 540.0,35.17 542.0,35.26 544.0,35.35 546.0,35.44 548.0,35.54 550.0,35.64 552.0,35.74 554.0,35.85 556.0,35.96 558.0,36.08 560.0,36.19 562.0,36.32 564.0,36.44 566.0,36.57 568.0,36.71 570.0,36.85 572.0,36.99 574.0,37.14 576.0,37.30 578.0,37.45 580.0,37.62 582.0,37.79 584.0,37.97 586.0,38.15 588.0,38.33 590.0,38.53 592.0,38.73 594.0,38.93 596.0,39.15 598.0,39.37 600.0,39.60 602.0,39.83 604.0,40.07 606.0,40.32 608.0,40.58 610.0,40.85 612.0,41.13 614.0,41.41 616.0,41.70 618.0,42.01 620.0,42.32 622.0,42.64 624.0,42.98 626.0,43.32 628.0,43.67 630.0,44.04 632.0,44.41 634.0,44.80 636.0,45.20 638.0,45.62 640.0,46.04 642.0,46.48 644.0,46.93 646.0,47.40 648.0,47.87 650.0,48.37 652.0,48.88 654.0,49.40 656.0,49.94 658.0,50.49 660.0,51.06 662.0,51.65 664.0,52.26 666.0,52.88 668.0,53.52 670.0,54.17 672.0,54.85 674.0,55.54 676.0,56.26 678.0,56.99 680.0,57.74 682.0,58.52 684.0,59.31 686.0,60.13 688.0,60.96 690.0,61.82 692.0,62.70 694.0,63.60 696.0,64.53 698.0,65.48 700.0,66.45 702.0,67.44 704.0,68.46 706.0,69.50 708.0,70.57 710.0,71.66 712.0,72.78 714.0,73.92 716.0,75.09 718.0,76.28 720.0,77.50 722.0,78.74 724.0,80.01 726.0,81.31 728.0,82.63 730.0,83.98 732.0,85.35 734.0,86.75 736.0,88.18 738.0,89.63 740.0,91.11 742.0,92.61 744.0,94.14 746.0,95.69 748.0,97.27 750.0,98.88 752.0,100.50 754.0,102.16 756.0,103.83 758.0,105.53 760.0,107.26 762.0,109.00 764.0,110.77 766.0,112.56 768.0,114.37 770.0,116.20 772.0,118.06 774.0,119.93 776.0,121.82 778.0,123.73 780.0,125.65 782.0,127.60 784.0,129.56 786.0,131.53 788.0,133.52 790.0,135.53 792.0,137.54 794.0,139.57 796.0,141.61 798.0,143.66 800.0,145.72 802.0,147.79 804.0,149.87 806.0,151.96 808.0,154.05 810.0,156.15 812.0,158.25 814.0,160.35 816.0,162.46 818.0,164.57 820.0,166.69 822.0,168.80 824.0,170.91 826.0,173.02 828.0,175.13 830.0,177.24 832.0,179.34 834.0,181.44 836.0,183.53 838.0,185.62 840.0,187.70 842.0,189.78 844.0,191.84 846.0,193.90 848.0,195.95 850.0,197.98 852.0,200.01 854.0,202.03 856.0,204.03 858.0,206.03 860.0,208.01 862.0,209.97 864.0,211.93 866.0,213.87 868.0,215.79 870.0,217.70 872.0,219.60 874.0,221.47 876.0,223.34 878.0,225.19 880.0,227.02 882.0,228.83 884.0,230.63 886.0,232.40 888.0,234.17 890.0,235.91 892.0,237.64 894.0,239.34 896.0,241.03 898.0,242.71 900.0,244.36 902.0,245.99 904.0,247.61 906.0,249.21 908.0,250.78 910.0,252.34 912.0,253.88 914.0,255.41 916.0,256.91 918.0,258.39 920.0,259.86 922.0,261.31 924.0,262.74 926.0,264.15 928.0,265.54 930.0,266.91 932.0,268.26 934.0,269.60 936.0,270.92 938.0,272.22 940.0,273.50 942.0,274.76 944.0,276.01 946.0,277.24 948.0,278.45 950.0,279.65 952.0,280.82 954.0,281.98 956.0,283.12 958.0,284.25 960.0,285.36 962.0,286.45 964.0,287.53 966.0,288.59 968.0,289.64 970.0,290.67 972.0,291.68 974.0,292.68 976.0,293.66 978.0,294.63 980.0,295.58 982.0,296.52 984.0,297.45 986.0,298.35 988.0,299.25 990.0,300.13 992.0,301.00 994.0,301.85 996.0,302.69 998.0,303.52 1000.0,304.34 1002.0,305.14 1004.0,305.93 1006.0,306.70 1008.0,307.47 1010.0,308.22 1012.0,308.96 1014.0,309.68 1016.0,310.40 1018.0,311.10 1020.0,311.80 1022.0,312.48 1024.0,313.15 1026.0,313.81 1028.0,314.46 1030.0,315.10 1032.0,315.72 1034.0,316.34 1036.0,316.95 1038.0,317.55 1040.0,318.13 1042.0,318.71 1044.0,319.28 1046.0,319.84 1048.0,320.39 1050.0,320.93 1052.0,321.46 1054.0,321.99 1056.0,322.50 1058.0,323.01 1060.0,323.51 1062.0,323.99 1064.0,324.48 1066.0,324.95 1068.0,325.41 1070.0,325.87 1072.0,326.32 1074.0,326.76 1076.0,327.20 1078.0,327.63 1080.0,328.05 1082.0,328.46 1084.0,328.87 1086.0,329.27 1088.0,329.66 1090.0,330.05 1092.0,330.43 1094.0,330.80 1096.0,331.17 1098.0,331.53 1100.0,331.89 1102.0,332.24 1104.0,332.58 1106.0,332.92 1108.0,333.25 1110.0,333.58 1112.0,333.90 1114.0,334.21 1116.0,334.52 1118.0,334.83 1120.0,335.13 1122.0,335.42 1124.0,335.71 1126.0,336.00 1128.0,336.28 1130.0,336.55 1132.0,336.82 1134.0,337.09 1136.0,337.35 1138.0,337.61 1140.0,337.86 1142.0,338.11 1144.0,338.35 1146.0,338.59 1148.0,338.83 1150.0,339.06 1152.0,339.29 1154.0,339.51 1156.0,339.73 1158.0,339.95 1160.0,340.16 1162.0,340.37 1164.0,340.58 1166.0,340.78 1168.0,340.98 1170.0,341.18 1172.0,341.37 1174.0,341.56 1176.0,341.75 1178.0,341.93 1180.0,342.11 1182.0,342.28 1184.0,342.46 1186.0,342.63 1188.0,342.80 1190.0,342.96 1192.0,343.12 1194.0,343.28" fill="none" stroke="#fff" stroke-width="1.05"/>
<polyline points="94.0,417.58 96.0,417.58 98.0,417.58 100.0,417.58 102.0,417.58 104.0,417.58 106.0,417.58 108.0,417.58 110.0,417.58 112.0,417.58 114.0,417.58 116.0,417.58 118.0,417.58 120.0,417.59 122.0,417.59 124.0,417.59 126.0,417.59 128.0,417.59 130.0,417.59 132.0,417.59 134.0,417.59 136.0,417.59 138.0,417.59 140.0,417.59 142.0,417.59 144.0,417.59 146.0,417.59 148.0,417.59 150.0,417.59 152.0,417.59 154.0,417.59 156.0,417.59 158.0,417.59 160.0,417.59 162.0,417.59 164.0,417.59 166.0,417.59 168.0,417.59 170.0,417.59 172.0,417.59 174.0,417.59 176.0,417.59 178.0,417.59 180.0,417.59 182.0,417.59 184.0,417.59 186.0,417.59 188.0,417.59 190.0,417.59 192.0,417.59 194.0,417.59 196.0,417.59 198.0,417.59 200.0,417.59 202.0,417.59 204.0,417.59 206.0,417.59 208.0,417.59 210.0,417.59 212.0,417.59 214.0,417.59 216.0,417.59 218.0,417.59 220.0,417.59 222.0,417.59 224.0,417.60 226.0,417.60 228.0,417.60 230.0,417.60 232.0,417.60 234.0,417.60 236.0,417.60 238.0,417.60 240.0,417.60 242.0,417.60 244.0,417.60 246.0,417.60 248.0,417.60 250.0,417.60 252.0,417.60 254.0,417.60 256.0,417.60 258.0,417.61 260.0,417.61 262.0,417.61 264.0,417.61 266.0,417.61 268.0,417.61 270.0,417.61 272.0,417.61 274.0,417.61 276.0,417.61 278.0,417.61 280.0,417.62 282.0,417.62 284.0,417.62 286.0,417.62 288.0,417.62 290.0,417.62 292.0,417.62 294.0,417.62 296.0,417.63 298.0,417.63 300.0,417.63 302.0,417.63 304.0,417.63 306.0,417.63 308.0,417.64 310.0,417.64 312.0,417.64 314.0,417.64 316.0,417.64 318.0,417.65 320.0,417.65 322.0,417.65 324.0,417.65 326.0,417.65 328.0,417.66 330.0,417.66 332.0,417.66 334.0,417.66 336.0,417.67 338.0,417.67 340.0,417.67 342.0,417.68 344.0,417.68 346.0,417.68 348.0,417.69 350.0,417.69 352.0,417.69 354.0,417.70 356.0,417.70 358.0,417.71 360.0,417.71 362.0,417.72 364.0,417.72 366.0,417.72 368.0,417.73 370.0,417.73 372.0,417.74 374.0,417.75 376.0,417.75 378.0,417.76 380.0,417.76 382.0,417.77 384.0,417.78 386.0,417.78 388.0,417.79 390.0,417.80 392.0,417.80 394.0,417.81 396.0,417.82 398.0,417.83 400.0,417.84 402.0,417.85 404.0,417.85 406.0,417.86 408.0,417.87 410.0,417.88 412.0,417.89 414.0,417.91 416.0,417.92 418.0,417.93 420.0,417.94 422.0,417.95 424.0,417.97 426.0,417.98 428.0,417.99 430.0,418.01 432.0,418.02 434.0,418.04 436.0,418.05 438.0,418.07 440.0,418.09 442.0,418.10 444.0,418.12 446.0,418.14 448.0,418.16 450.0,418.18 452.0,418.20 454.0,418.22 456.0,418.24 458.0,418.27 460.0,418.29 462.0,418.32 464.0,418.34 466.0,418.37 468.0,418.39 470.0,418.42 472.0,418.45 474.0,418.48 476.0,418.51 478.0,418.55 480.0,418.58 482.0,418.61 484.0,418.65 486.0,418.69 488.0,418.73 490.0,418.77 492.0,418.81 494.0,418.85 496.0,418.89 498.0,418.94 500.0,418.99 502.0,419.03 504.0,419.08 506.0,419.14 508.0,419.19 510.0,419.25 512.0,419.30 514.0,419.36 516.0,419.42 518.0,419.49 520.0,419.55 522.0,419.62 524.0,419.69 526.0,419.77 528.0,419.84 530.0,419.92 532.0,420.00 534.0,420.08 536.0,420.17 538.0,420.26 540.0,420.35 542.0,420.45 544.0,420.55 546.0,420.65 548.0,420.75 550.0,420.86 552.0,420.97 554.0,421.09 556.0,421.21 558.0,421.34 560.0,421.46 562.0,421.60 564.0,421.73 566.0,421.88 568.0,422.02 570.0,422.18 572.0,422.33 574.0,422.49 576.0,422.66 578.0,422.83 580.0,423.01 582.0,423.20 584.0,423.39 586.0,423.59 588.0,423.79 590.0,424.00 592.0,424.22 594.0,424.44 596.0,424.67 598.0,424.91 600.0,425.16 602.0,425.41 604.0,425.68 606.0,425.95 608.0,426.23 610.0,426.52 612.0,426.82 614.0,427.13 616.0,427.44 618.0,427.77 620.0,428.11 622.0,428.46 624.0,428.82 626.0,429.19 628.0,429.57 630.0,429.97 632.0,430.38 634.0,430.80 636.0,431.23 638.0,431.67 640.0,432.13 642.0,432.61 644.0,433.09 646.0,433.60 648.0,434.11 650.0,434.64 652.0,435.19 654.0,435.76 656.0,436.34 658.0,436.93 660.0,437.55 662.0,438.18 664.0,438.83 666.0,439.50 668.0,440.18 670.0,440.89 672.0,441.61 674.0,442.36 676.0,443.12 678.0,443.91 680.0,444.71 682.0,445.54 684.0,446.39 686.0,447.26 688.0,448.15 690.0,449.07 692.0,450.01 694.0,450.97 696.0,451.96 698.0,452.97 700.0,454.00 702.0,455.06 704.0,456.14 706.0,457.25 708.0,458.38 710.0,459.54 712.0,460.72 714.0,461.93 716.0,463.17 718.0,464.43 720.0,465.71 722.0,467.03 724.0,468.37 726.0,469.73 728.0,471.12 730.0,472.54 732.0,473.98 734.0,475.45 736.0,476.95 738.0,478.47 740.0,480.02 742.0,481.59 744.0,483.19 746.0,484.81 748.0,486.46 750.0,488.13 752.0,489.82 754.0,491.54 756.0,493.29 758.0,495.05 760.0,496.84 762.0,498.65 764.0,500.48 766.0,502.33 768.0,504.20 770.0,506.09 772.0,508.00 774.0,509.92 776.0,511.87 778.0,513.83 780.0,515.81 782.0,517.80 784.0,519.81 786.0,521.83 788.0,523.86 790.0,525.91 792.0,527.97 794.0,530.03 796.0,532.11 798.0,534.20 800.0,536.29 802.0,538.39 804.0,540.50 806.0,542.61 808.0,544.73 810.0,546.85 812.0,548.97 814.0,551.10 816.0,553.23 818.0,555.35 820.0,557.48 822.0,559.60 824.0,561.72 826.0,563.84 828.0,565.96 830.0,568.07 832.0,570.17 834.0,572.27 836.0,574.36 838.0,576.45 840.0,578.52 842.0,580.59 844.0,582.65 846.0,584.69 848.0,586.73 850.0,588.76 852.0,590.77 854.0,592.77 856.0,594.76 858.0,596.74 860.0,598.70 862.0,600.64 864.0,602.58 866.0,604.49 868.0,606.39 870.0,608.28 872.0,610.15 874.0,612.00 876.0,613.84 878.0,615.66 880.0,617.46 882.0,619.24 884.0,621.01 886.0,622.76 888.0,624.49 890.0,626.20 892.0,627.90 894.0,629.57 896.0,631.23 898.0,632.87 900.0,634.49 902.0,636.09 904.0,637.67 906.0,639.24 908.0,640.78 910.0,642.31 912.0,643.81 914.0,645.30 916.0,646.77 918.0,648.22 920.0,649.65 922.0,651.06 924.0,652.46 926.0,653.83 928.0,655.19 930.0,656.53 932.0,657.85 934.0,659.15 936.0,660.43 938.0,661.70 940.0,662.95 942.0,664.18 944.0,665.39 946.0,666.59 948.0,667.76 950.0,668.93 952.0,670.07 954.0,671.20 956.0,672.31 958.0,673.40 960.0,674.48 962.0,675.54 964.0,676.59 966.0,677.62 968.0,678.64 970.0,679.64 972.0,680.62 974.0,681.59 976.0,682.54 978.0,683.48 980.0,684.41 982.0,685.32 984.0,686.21 986.0,687.10 988.0,687.97 990.0,688.82 992.0,689.66 994.0,690.49 996.0,691.31 998.0,692.11 1000.0,692.90 1002.0,693.67 1004.0,694.44 1006.0,695.19 1008.0,695.93 1010.0,696.66 1012.0,697.37 1014.0,698.08 1016.0,698.77 1018.0,699.45 1020.0,700.13 1022.0,700.79 1024.0,701.44 1026.0,702.07 1028.0,702.70 1030.0,703.32 1032.0,703.93 1034.0,704.53 1036.0,705.11 1038.0,705.69 1040.0,706.26 1042.0,706.82 1044.0,707.37 1046.0,707.91 1048.0,708.45 1050.0,708.97 1052.0,709.48 1054.0,709.99 1056.0,710.49 1058.0,710.98 1060.0,711.46 1062.0,711.93 1064.0,712.40 1066.0,712.86 1068.0,713.31 1070.0,713.75 1072.0,714.19 1074.0,714.61 1076.0,715.03 1078.0,715.45 1080.0,715.86 1082.0,716.26 1084.0,716.65 1086.0,717.04 1088.0,717.42 1090.0,717.79 1092.0,718.16 1094.0,718.52 1096.0,718.88 1098.0,719.23 1100.0,719.57 1102.0,719.91 1104.0,720.24 1106.0,720.57 1108.0,720.89 1110.0,721.20 1112.0,721.51 1114.0,721.82 1116.0,722.12 1118.0,722.41 1120.0,722.70 1122.0,722.99 1124.0,723.27 1126.0,723.54 1128.0,723.81 1130.0,724.08 1132.0,724.34 1134.0,724.60 1136.0,724.85 1138.0,725.10 1140.0,725.35 1142.0,725.59 1144.0,725.82 1146.0,726.05 1148.0,726.28 1150.0,726.51 1152.0,726.73 1154.0,726.95 1156.0,727.16 1158.0,727.37 1160.0,727.57 1162.0,727.78 1164.0,727.98 1166.0,728.17 1168.0,728.36 1170.0,728.55 1172.0,728.74 1174.0,728.92 1176.0,729.10 1178.0,729.28 1180.0,729.45 1182.0,729.62 1184.0,729.79 1186.0,729.96 1188.0,730.12 1190.0,730.28 1192.0,730.44 1194.0,730.59" fill="none" stroke="#fff" stroke-width="1.05"/>
<rect x="2" y="778.5" width="1191" height="282.5" fill="#4c5054"/>
<rect x="2" y="781" width="1" height="280" fill="#8a8e92"/>
<rect x="5" y="779" width="1188" height="282" fill="#cbdeee"/>
<defs><linearGradient id="tb" x1="0" y1="0" x2="0" y2="1"><stop offset="0" stop-color="#c3cfdb"/><stop offset="1" stop-color="#dbe5ef"/></linearGradient></defs>
<rect x="5" y="779" width="1188" height="31" fill="url(#tb)"/>
<rect x="6" y="779" width="1187" height="1.2" fill="#e4ecf6"/>
<rect x="5" y="780" width="1" height="30" fill="#e2ecf6"/>
<rect x="12" y="808.8" width="1181" height="1" fill="#dfe8f2"/>
<rect x="12" y="810" width="1181" height="251" fill="#6b7075"/>
<rect x="14" y="811.7" width="1179" height="249.3" fill="#fff"/>
<g stroke="#1a0f9a" fill="none"><line x1="16" y1="796.5" x2="20" y2="796.5" stroke-width="1.2"/><line x1="20.5" y1="792" x2="20.5" y2="801" stroke-width="2"/><line x1="21" y1="794" x2="26" y2="789" stroke-width="0.9"/><line x1="21" y1="799" x2="27" y2="805" stroke-width="0.9"/></g><path d="M22.5 803.5 L25.5 800.5 L25.8 804.2 Z" fill="#1a0f9a"/>
<text x="34.0" y="803.0" font-size="12" font-weight="normal" fill="#3a4756" text-anchor="start" textLength="60.0" lengthAdjust="spacingAndGlyphs" >noise2.asc</text>
<rect x="1164.5" y="788.5" width="40" height="18" rx="2" fill="#d4dde7" stroke="#8e98a3"/>
<rect x="1174.5" y="797.5" width="13" height="6" rx="1" fill="#f4fbff" stroke="#3c4650" stroke-width="1.2"/>
<line x1="249.5" y1="862.5" x2="520.5" y2="862.5" stroke="#16166e" stroke-width="1.25"/>
<line x1="249.5" y1="862.5" x2="249.5" y2="1061" stroke="#16166e" stroke-width="1.25"/>
<line x1="325.5" y1="862.5" x2="325.5" y2="950" stroke="#16166e" stroke-width="1.25"/>
<rect x="319" y="895" width="13" height="33" fill="#000080"/>
<line x1="412.5" y1="862.5" x2="412.5" y2="881" stroke="#16166e" stroke-width="1.25"/>
<line x1="401" y1="881.5" x2="423" y2="881.5" stroke="#16166e" stroke-width="1.25"/>
<line x1="401" y1="887.5" x2="423" y2="887.5" stroke="#16166e" stroke-width="1.25"/>
<line x1="412.5" y1="887.5" x2="412.5" y2="906" stroke="#16166e" stroke-width="1.25"/>
<path d="M399.5 906.5 L424.5 906.5 L412.5 918.5 Z" fill="none" stroke="#16166e" stroke-width="1.3"/>
<line x1="520.5" y1="862.5" x2="520.5" y2="942.5" stroke="#16166e" stroke-width="1.25"/>
<line x1="325.5" y1="949.5" x2="303" y2="949.5" stroke="#16166e" stroke-width="1.25"/>
<line x1="303" y1="949.5" x2="303" y2="969" stroke="#16166e" stroke-width="1.25"/>
<line x1="292.5" y1="969.5" x2="314.5" y2="969.5" stroke="#16166e" stroke-width="1.25"/>
<line x1="292.5" y1="974.5" x2="314.5" y2="974.5" stroke="#16166e" stroke-width="1.25"/>
<line x1="303" y1="974.5" x2="303" y2="993" stroke="#16166e" stroke-width="1.25"/>
<path d="M291.5 993.5 L315.5 993.5 L303.5 1005 Z" fill="none" stroke="#16166e" stroke-width="1.3"/>
<line x1="325.5" y1="949.5" x2="325.5" y2="971.5" stroke="#16166e" stroke-width="1.25"/>
<line x1="325.5" y1="971.5" x2="357" y2="971.5" stroke="#16166e" stroke-width="1.25"/>
<rect x="357" y="965" width="33" height="12" fill="#000080"/>
<line x1="390" y1="971.5" x2="494" y2="971.5" stroke="#16166e" stroke-width="1.25"/>
<line x1="346.5" y1="971.5" x2="346.5" y2="1039" stroke="#16166e" stroke-width="1.25"/>
<line x1="346.5" y1="1055.5" x2="346.5" y2="1061" stroke="#16166e" stroke-width="1.25"/>
<path d="M336.3 1055.3 L357.5 1055.3 L346.7 1039.5 Z" fill="none" stroke="#16166e" stroke-width="1.15"/>
<path d="M333.2 1041.6 L336 1039 L357.5 1039 L360.6 1035.6" fill="none" stroke="#16166e" stroke-width="1.8"/>
<line x1="433.5" y1="971.5" x2="433.5" y2="990.5" stroke="#16166e" stroke-width="1.25"/>
<line x1="422.5" y1="990.5" x2="445" y2="990.5" stroke="#16166e" stroke-width="1.25"/>
<line x1="422.5" y1="995.5" x2="445" y2="995.5" stroke="#16166e" stroke-width="1.25"/>
<line x1="433.5" y1="995.5" x2="433.5" y2="1061" stroke="#16166e" stroke-width="1.25"/>
<line x1="421" y1="1058.5" x2="446" y2="1058.5" stroke="#16166e" stroke-width="1.25"/>
<ellipse cx="512.8" cy="968.3" rx="29.6" ry="27.2" fill="none" stroke="#16166e" stroke-width="1.1"/>
<rect x="494.5" y="960.5" width="4" height="22" fill="#fff" stroke="#16166e" stroke-width="1.1"/>
<line x1="498.5" y1="969.5" x2="520.8" y2="942.3" stroke="#16166e" stroke-width="1.1"/>
<line x1="498.5" y1="970.5" x2="520.8" y2="994.5" stroke="#16166e" stroke-width="1.1"/>
<path d="M517.2 985.4 L520.8 994.5 L512.4 988.1" fill="none" stroke="#16166e" stroke-width="1.1"/>
<line x1="520.5" y1="994.5" x2="520.5" y2="1003.5" stroke="#16166e" stroke-width="1.25"/>
<line x1="520.5" y1="1003.5" x2="758.5" y2="1003.5" stroke="#16166e" stroke-width="1.25"/>
<line x1="596.5" y1="1003.5" x2="596.5" y2="1022" stroke="#16166e" stroke-width="1.25"/>
<line x1="585.5" y1="1022.5" x2="608" y2="1022.5" stroke="#16166e" stroke-width="1.25"/>
<line x1="585.5" y1="1028.5" x2="608" y2="1028.5" stroke="#16166e" stroke-width="1.25"/>
<line x1="596.5" y1="1028" x2="596.5" y2="1047" stroke="#16166e" stroke-width="1.25"/>
<path d="M584.5 1047.5 L608.5 1047.5 L596.5 1059 Z" fill="none" stroke="#16166e" stroke-width="1.3"/>
<line x1="758.5" y1="1003.5" x2="758.5" y2="1060" stroke="#16166e" stroke-width="1.25"/>
<rect x="752" y="1014" width="13" height="33" fill="#000080"/>
<path d="M746 1056 L748 1059.5 L769.5 1059.5 L772 1056" fill="none" stroke="#16166e" stroke-width="1.3"/>
<rect x="225" y="1019" width="49" height="3.2" fill="#10106e"/>
<rect x="235" y="1027.2" width="26" height="3.2" fill="#10106e"/>
<rect x="322.0" y="859.0" width="7" height="7" fill="#e0104a"/>
<rect x="409.0" y="859.0" width="7" height="7" fill="#e0104a"/>
<rect x="322.0" y="946.0" width="7" height="7" fill="#e0104a"/>
<rect x="343.0" y="968.0" width="7" height="7" fill="#e0104a"/>
<rect x="430.0" y="968.0" width="7" height="7" fill="#e0104a"/>
<rect x="593.0" y="1000.0" width="7" height="7" fill="#e0104a"/>
<text x="338.7" y="906.0" font-size="15" font-weight="bold" fill="#000" text-anchor="start" textLength="19.5" lengthAdjust="spacingAndGlyphs" stroke="#000" stroke-width="0.25">R1</text>
<text x="338.7" y="931.0" font-size="15" font-weight="bold" fill="#000" text-anchor="start" textLength="33.3" lengthAdjust="spacingAndGlyphs" stroke="#000" stroke-width="0.25">3.5k</text>
<text x="417.4" y="873.7" font-size="15" font-weight="bold" fill="#000" text-anchor="start" textLength="18.7" lengthAdjust="spacingAndGlyphs" stroke="#000" stroke-width="0.25">C3</text>
<text x="417.4" y="905.5" font-size="15" font-weight="bold" fill="#000" text-anchor="start" textLength="28.6" lengthAdjust="spacingAndGlyphs" stroke="#000" stroke-width="0.25">47&#956;</text>
<text x="534.6" y="949.8" font-size="15" font-weight="bold" fill="#000" text-anchor="start" textLength="20.4" lengthAdjust="spacingAndGlyphs" stroke="#000" stroke-width="0.25">Q1</text>
<text x="547.2" y="990.0" font-size="15" font-weight="bold" fill="#000" text-anchor="start" textLength="70.1" lengthAdjust="spacingAndGlyphs" stroke="#000" stroke-width="0.25">2N3391A</text>
<text x="439.4" y="981.8" font-size="15" font-weight="bold" fill="#000" text-anchor="start" textLength="18.4" lengthAdjust="spacingAndGlyphs" stroke="#000" stroke-width="0.25">C1</text>
<text x="439.4" y="1014.5" font-size="15" font-weight="bold" fill="#000" text-anchor="start" textLength="33.1" lengthAdjust="spacingAndGlyphs" stroke="#000" stroke-width="0.25">0.1&#956;</text>
<text x="601.6" y="1014.7" font-size="15" font-weight="bold" fill="#000" text-anchor="start" textLength="18.4" lengthAdjust="spacingAndGlyphs" stroke="#000" stroke-width="0.25">C2</text>
<text x="601.2" y="1046.0" font-size="15" font-weight="bold" fill="#000" text-anchor="start" textLength="28.6" lengthAdjust="spacingAndGlyphs" stroke="#000" stroke-width="0.25">47&#956;</text>
<text x="688.9" y="1000.0" font-size="15" font-weight="bold" fill="#000" text-anchor="start" textLength="30.5" lengthAdjust="spacingAndGlyphs" stroke="#000" stroke-width="0.25">OUT</text>
<text x="772.7" y="1026.2" font-size="15" font-weight="bold" fill="#000" text-anchor="start" textLength="19.3" lengthAdjust="spacingAndGlyphs" stroke="#000" stroke-width="0.25">R2</text>
<text x="772.7" y="1050.2" font-size="15" font-weight="bold" fill="#000" text-anchor="start" textLength="18.3" lengthAdjust="spacingAndGlyphs" stroke="#000" stroke-width="0.25">10</text>
<text x="223.5" y="1016.2" font-size="15" font-weight="bold" fill="#000" text-anchor="start" textLength="18.5" lengthAdjust="spacingAndGlyphs" stroke="#000" stroke-width="0.25">V3</text>
<text x="258.4" y="1016.2" font-size="15" font-weight="bold" fill="#000" text-anchor="start" textLength="18.3" lengthAdjust="spacingAndGlyphs" stroke="#000" stroke-width="0.25">40</text>
<text x="258.4" y="1035.8" font-size="15" font-weight="bold" fill="#000" text-anchor="start" textLength="32.1" lengthAdjust="spacingAndGlyphs" stroke="#000" stroke-width="0.25">AC 1</text>
<text x="309.0" y="960.7" font-size="15" font-weight="bold" fill="#000" text-anchor="start" textLength="19.6" lengthAdjust="spacingAndGlyphs" stroke="#000" stroke-width="0.25">C4</text>
<text x="309.0" y="992.6" font-size="15" font-weight="bold" fill="#000" text-anchor="start" textLength="33.8" lengthAdjust="spacingAndGlyphs" stroke="#000" stroke-width="0.25">0.1&#956;</text>
<text x="363.5" y="961.8" font-size="15" font-weight="bold" fill="#000" text-anchor="start" textLength="20.0" lengthAdjust="spacingAndGlyphs" stroke="#000" stroke-width="0.25">R3</text>
<text x="365.6" y="992.2" font-size="15" font-weight="bold" fill="#000" text-anchor="start" textLength="17.0" lengthAdjust="spacingAndGlyphs" stroke="#000" stroke-width="0.25">1k</text>
<text x="321.0" y="1030.5" font-size="15" font-weight="bold" fill="#000" text-anchor="start" textLength="18.5" lengthAdjust="spacingAndGlyphs" stroke="#000" stroke-width="0.25">D1</text>
<g fill="#000"><rect x="234" y="962.8" width="11" height="1.7"/><rect x="234" y="971.6" width="11" height="1.8"/><polygon points="242,962.8 245,962.8 245,964.6 237.2,971.6 234,971.6 234,969.8"/><rect x="234" y="975.2" width="2.2" height="5.8"/><rect x="242.8" y="975.2" width="2.2" height="5.8"/><rect x="234" y="977" width="11" height="2.6"/></g>
<g stroke="#c434cc" stroke-width="1.2" fill="none" stroke-linecap="round"><line x1="652" y1="1003" x2="825.6" y2="574.6"/><line x1="831.2" y1="570.2" x2="806.6" y2="581.5"/><line x1="831.2" y1="570.2" x2="839.6" y2="623.3"/></g>
<defs><linearGradient id="wm" gradientUnits="userSpaceOnUse" x1="0" y1="978" x2="0" y2="1032"><stop offset="0" stop-color="#c2daf0"/><stop offset="0.33" stop-color="#d6e6f3"/><stop offset="0.6" stop-color="#dcebf6"/><stop offset="0.62" stop-color="#eef6fc"/><stop offset="0.645" stop-color="#9ac5e9"/><stop offset="1" stop-color="#88b8e3"/></linearGradient></defs>
<path d="M798.0 979.5h12.0v53.5h-12.0Z M795.7 998.0h27.5v10.5h-27.5Z M798.0 1022.5h25.2v10.5h-25.2Z M828.0 997.5h38.6v35.5h-38.6Z M871.0 981.5h13.0v51.5h-13.0Z M871.0 998.0h35.5v9.5h-35.5Z M893.4 998.0h13.1v35.0h-13.1Z M912.8 998.0h12.5v35.0h-12.5Z M912.8 998.0h36.0v9.5h-36.0Z M935.6 998.0h13.1v35.0h-13.1Z M956.0 998.0h37.7v35.0h-37.7Z M998.2 997.5h12.5v35.5h-12.5Z M998.2 997.5h29.5v13.0h-29.5Z M1032.4 985.9h15.6v9.6h-15.6Z M1032.4 997.5h15.6v35.5h-15.6Z M1052.6 1017.5h15.7v15.5h-15.7Z M1073.8 997.5h12.5v35.5h-12.5Z M1073.8 997.5h28.6v13.0h-28.6Z M1108.9 997.5h12.5v35.5h-12.5Z M1132.0 997.5h12.8v35.5h-12.8Z M1108.9 1022.5h35.9v10.5h-35.9Z" fill="#8d9298"/>
<path d="M796.0 978.0h12.0v53.5h-12.0Z M793.7 996.5h27.5v10.5h-27.5Z M796.0 1021.0h25.2v10.5h-25.2Z M826.0 996.0h38.6v35.5h-38.6Z M869.0 980.0h13.0v51.5h-13.0Z M869.0 996.5h35.5v9.5h-35.5Z M891.4 996.5h13.1v35.0h-13.1Z M910.8 996.5h12.5v35.0h-12.5Z M910.8 996.5h36.0v9.5h-36.0Z M933.6 996.5h13.1v35.0h-13.1Z M954.0 996.5h37.7v35.0h-37.7Z M996.2 996.0h12.5v35.5h-12.5Z M996.2 996.0h29.5v13.0h-29.5Z M1030.4 984.4h15.6v9.6h-15.6Z M1030.4 996.0h15.6v35.5h-15.6Z M1050.6 1016.0h15.7v15.5h-15.7Z M1071.8 996.0h12.5v35.5h-12.5Z M1071.8 996.0h28.6v13.0h-28.6Z M1106.9 996.0h12.5v35.5h-12.5Z M1130.0 996.0h12.8v35.5h-12.8Z M1106.9 1021.0h35.9v10.5h-35.9Z" fill="url(#wm)"/>
<rect x="838" y="1006" width="13" height="1.5" fill="#8d9298"/>
<rect x="838" y="1006" width="1.5" height="13" fill="#8d9298"/>
<rect x="839.5" y="1019" width="25" height="2.5" fill="#f4f9fd"/>
<rect x="882.2" y="1006" width="9.2" height="25.5" fill="#fff"/>
<rect x="882.2" y="1006" width="1.5" height="25.5" fill="#8d9298"/>
<rect x="882.2" y="1006" width="9.2" height="1.5" fill="#8d9298"/>
<rect x="923.3" y="1006" width="10.3" height="25.5" fill="#fff"/>
<rect x="923.3" y="1006" width="1.5" height="25.5" fill="#8d9298"/>
<rect x="923.3" y="1006" width="10.3" height="1.5" fill="#8d9298"/>
<rect x="954" y="1006" width="23" height="6" fill="#eef5fb"/>
<rect x="956" y="1006" width="21" height="1.5" fill="#8d9298"/>
<rect x="976.5" y="1006" width="1.5" height="12" fill="#8d9298"/>
<rect x="962" y="1017.5" width="15" height="1.5" fill="#8d9298"/>
<rect x="1008.7" y="1009" width="17" height="22.5" fill="#fff"/>
<rect x="1008.7" y="1009" width="1.5" height="22.5" fill="#8d9298"/>
<rect x="1010" y="1009" width="14" height="1.5" fill="#8d9298"/>
<rect x="1084.3" y="1009" width="16.1" height="22.5" fill="#fff"/>
<rect x="1084.3" y="1009" width="1.5" height="22.5" fill="#8d9298"/>
<rect x="1085" y="1009" width="14" height="1.5" fill="#8d9298"/>
<rect x="1119.4" y="996" width="10.6" height="25" fill="#fff"/>
<rect x="1119.4" y="996" width="1.5" height="25" fill="#8d9298"/>
<rect x="1119.4" y="1020" width="10.6" height="1.5" fill="#8d9298"/>
<polygon points="795,1026.5 801,1033.5 795,1033.5" fill="#fff"/>
<polygon points="825,1026.5 831,1033.5 825,1033.5" fill="#fff"/>
<polygon points="858.6,995 867.6,995 867.6,1002" fill="#fff"/>
<polygon points="825,1000 825,995 830,995" fill="#fff"/>
<polygon points="898.5,995.5 907.5,995.5 907.5,1002.5" fill="#fff"/>
<polygon points="940.7,995.5 949.7,995.5 949.7,1002.5" fill="#fff"/>
<polygon points="985.7,995.5 994.7,995.5 994.7,1002.5" fill="#fff"/>
<polygon points="953,1026.5 959,1033.5 953,1033.5" fill="#fff"/>
<polygon points="1019.7,995 1028.7,995 1028.7,1002" fill="#fff"/>
<polygon points="1094.4,995 1103.4,995 1103.4,1002" fill="#fff"/>
<polygon points="1105.9,1026.5 1111.9,1033.5 1105.9,1033.5" fill="#fff"/>
<circle cx="801.8" cy="1001.6" r="3.6" fill="#cfe3ea" stroke="#8fb0b8" stroke-width="1.1"/><line x1="799.8" y1="1003.6" x2="803.8" y2="999.6" stroke="#8fb0b8" stroke-width="1"/>
<circle cx="832.6" cy="1001.6" r="3.6" fill="#cfe3ea" stroke="#8fb0b8" stroke-width="1.1"/><line x1="830.6" y1="1003.6" x2="834.6" y2="999.6" stroke="#8fb0b8" stroke-width="1"/>
<circle cx="875.4" cy="1001.6" r="3.6" fill="#cfe3ea" stroke="#8fb0b8" stroke-width="1.1"/><line x1="873.4" y1="1003.6" x2="877.4" y2="999.6" stroke="#8fb0b8" stroke-width="1"/>
<circle cx="915.6" cy="1001.6" r="3.6" fill="#cfe3ea" stroke="#8fb0b8" stroke-width="1.1"/><line x1="913.6" y1="1003.6" x2="917.6" y2="999.6" stroke="#8fb0b8" stroke-width="1"/>
<circle cx="985" cy="1026" r="3.6" fill="#cfe3ea" stroke="#8fb0b8" stroke-width="1.1"/><line x1="983" y1="1028" x2="987" y2="1024" stroke="#8fb0b8" stroke-width="1"/>
<circle cx="1002" cy="1001.6" r="3.6" fill="#cfe3ea" stroke="#8fb0b8" stroke-width="1.1"/><line x1="1000" y1="1003.6" x2="1004" y2="999.6" stroke="#8fb0b8" stroke-width="1"/>
<circle cx="1077.4" cy="1001.6" r="3.6" fill="#cfe3ea" stroke="#8fb0b8" stroke-width="1.1"/><line x1="1075.4" y1="1003.6" x2="1079.4" y2="999.6" stroke="#8fb0b8" stroke-width="1"/>
<circle cx="1135" cy="1026" r="3.6" fill="#cfe3ea" stroke="#8fb0b8" stroke-width="1.1"/><line x1="1133" y1="1028" x2="1137" y2="1024" stroke="#8fb0b8" stroke-width="1"/>
</svg>
</body></html>
